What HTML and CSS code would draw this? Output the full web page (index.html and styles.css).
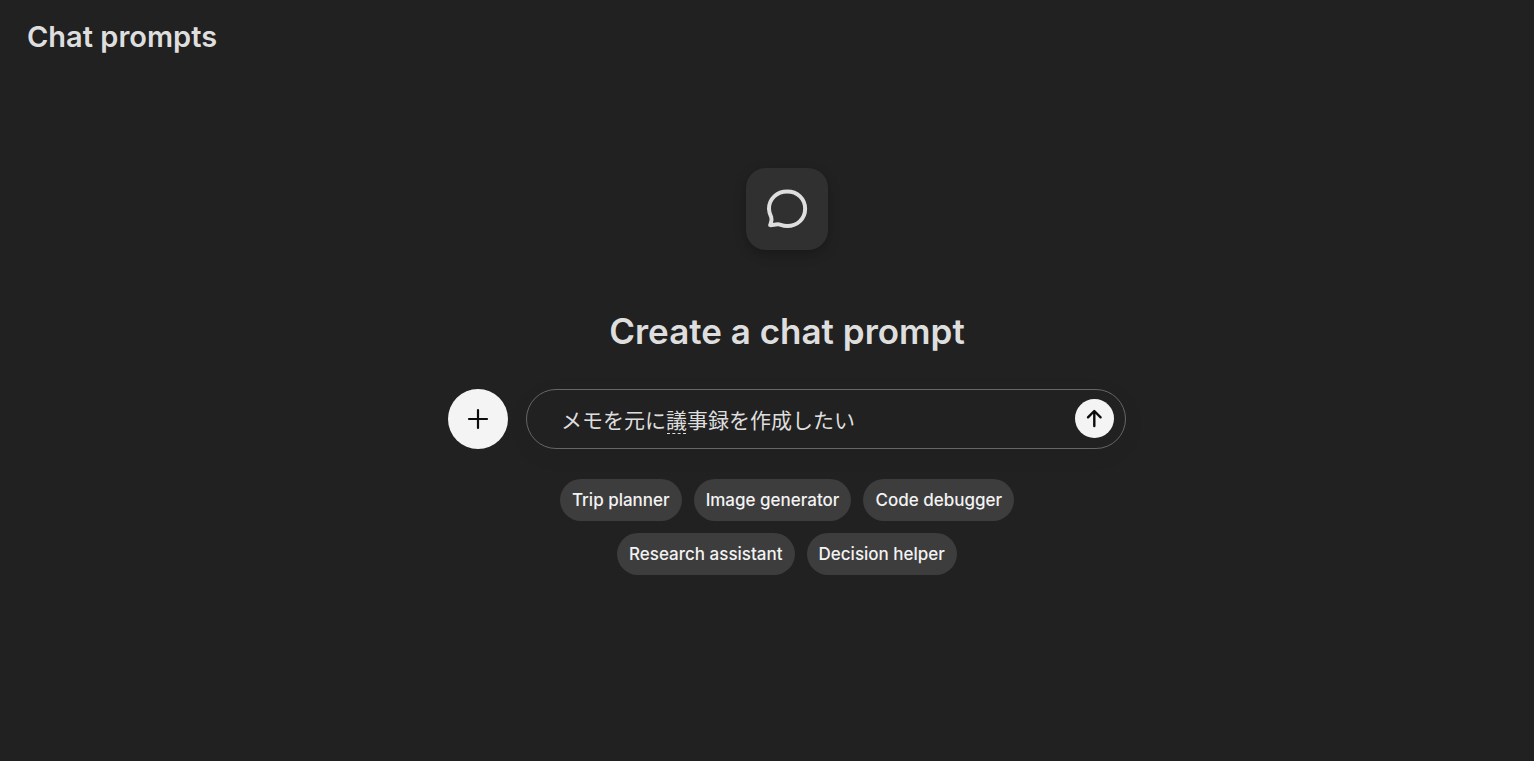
FILE: index.html
```html
<!DOCTYPE html>
<html lang="en">
<head>
<meta charset="utf-8">
<meta name="viewport" content="width=device-width, initial-scale=1">
<title>Chat prompts</title>
<link rel="stylesheet" href="styles.css">
</head>
<body>
<header class="header">
  <h1 class="header-title">Chat prompts</h1>
</header>
<main class="main">
  <div class="app-icon">
    <svg width="44" height="44" viewBox="0 0 42 42" fill="none" stroke="#dedede" stroke-width="3.8" stroke-linejoin="round" stroke-linecap="round" aria-hidden="true">
      <path d="M21.2 4.2C31 4.2 38.3 11.2 38.3 20.8C38.3 30.3 31 37.3 21.2 37.3C18.2 37.3 15.7 36.4 13.4 35.7C10.500 35.1 7.500 36.7 4.900 36.400C5.700 33.900 7 31.700 6 29C4.800 26.500 3.800 23.900 3.800 20.800C3.800 11.200 11.400 4.200 21.200 4.200Z"/>
    </svg>
  </div>
  <h2 class="heading">Create a chat prompt</h2>
  <form class="composer">
    <button class="add" type="button" aria-label="Add">
      <svg width="22" height="22" viewBox="0 0 22 22" fill="none" stroke="#0d0d0d" stroke-width="2.2" stroke-linecap="round" aria-hidden="true"><path d="M11 2V20M2 11H20"/></svg>
    </button>
    <div class="field">
      <div class="entry">
        <input class="input" type="text" lang="ja" aria-label="Prompt" value="メモを元に議事録を作成したい">
        <span class="composition" aria-hidden="true"></span>
      </div>
      <button class="send" type="button" aria-label="Send">
        <svg width="19" height="19" viewBox="0 0 19 19" fill="none" stroke="#0d0d0d" stroke-width="2.4" stroke-linecap="round" stroke-linejoin="round" aria-hidden="true"><path d="M9.300 17V2.500M3 8.300L9.300 2L15.600 8.300"/></svg>
      </button>
    </div>
  </form>
  <div class="chips">
    <button class="chip" type="button">Trip planner</button>
    <button class="chip" type="button">Image generator</button>
    <button class="chip" type="button">Code debugger</button>
    <button class="chip" type="button">Research assistant</button>
    <button class="chip" type="button">Decision helper</button>
  </div>
</main>
</body>
</html>
```
FILE: styles.css
```css
* { box-sizing: border-box; }

body {
  margin: 0;
  min-height: 100vh;
  background: #212121;
  color: #dedede;
  font-family: Inter, "Noto Sans CJK JP", sans-serif;
}

h1, h2 { margin: 0; font-weight: 600; }

button {
  border: 0;
  padding: 0;
  font-family: inherit;
  cursor: pointer;
}

svg { display: block; }

.header { padding: 17px 27px; }

.header-title {
  font-size: 29px;
  line-height: 40px;
}

.main {
  display: flex;
  flex-direction: column;
  align-items: center;
  padding: 94px 0 40px 40px;
}

.app-icon {
  display: grid;
  place-items: center;
  width: 82px;
  height: 82px;
  border-radius: 20px;
  background: #303030;
  box-shadow: 0 4px 12px rgba(0, 0, 0, 0.25);
}

.heading {
  margin-top: 56px;
  font-size: 35px;
  line-height: 50px;
}

.composer {
  display: flex;
  gap: 18px;
  width: 100%;
  max-width: 678px;
  margin-top: 33px;
}

.add {
  display: grid;
  place-items: center;
  flex: none;
  width: 60px;
  height: 60px;
  border-radius: 50%;
  background: #f4f4f4;
}

.field {
  display: flex;
  flex: 1;
  align-items: center;
  min-width: 0;
  height: 60px;
  padding: 0 11px 1px 34px;
  border: 1px solid #666;
  border-radius: 30px;
  box-shadow: 0 6px 24px rgba(0, 0, 0, 0.05);
}

.entry {
  position: relative;
  flex: 1;
  min-width: 0;
}

.input {
  display: block;
  width: 100%;
  height: 31px;
  padding: 0;
  border: 0;
  outline: 0;
  background: transparent;
  color: #dedede;
  font-family: "Noto Sans CJK JP", sans-serif;
  font-size: 21px;
}

.composition {
  position: absolute;
  left: 106px;
  top: 30px;
  width: 19px;
  border-top: 1px dashed #dedede;
}

.send {
  display: grid;
  place-items: center;
  flex: none;
  width: 39px;
  height: 39px;
  border-radius: 50%;
  background: #f4f4f4;
}

.chips {
  display: flex;
  flex-wrap: wrap;
  justify-content: center;
  gap: 12px;
  max-width: 480px;
  margin-top: 30px;
}

.chip {
  height: 42px;
  padding: 0 12px;
  border-radius: 21px;
  background: #3d3d3d;
  color: #f3f3f3;
  font-size: 17px;
  font-weight: 500;
  line-height: 24px;
}
```
